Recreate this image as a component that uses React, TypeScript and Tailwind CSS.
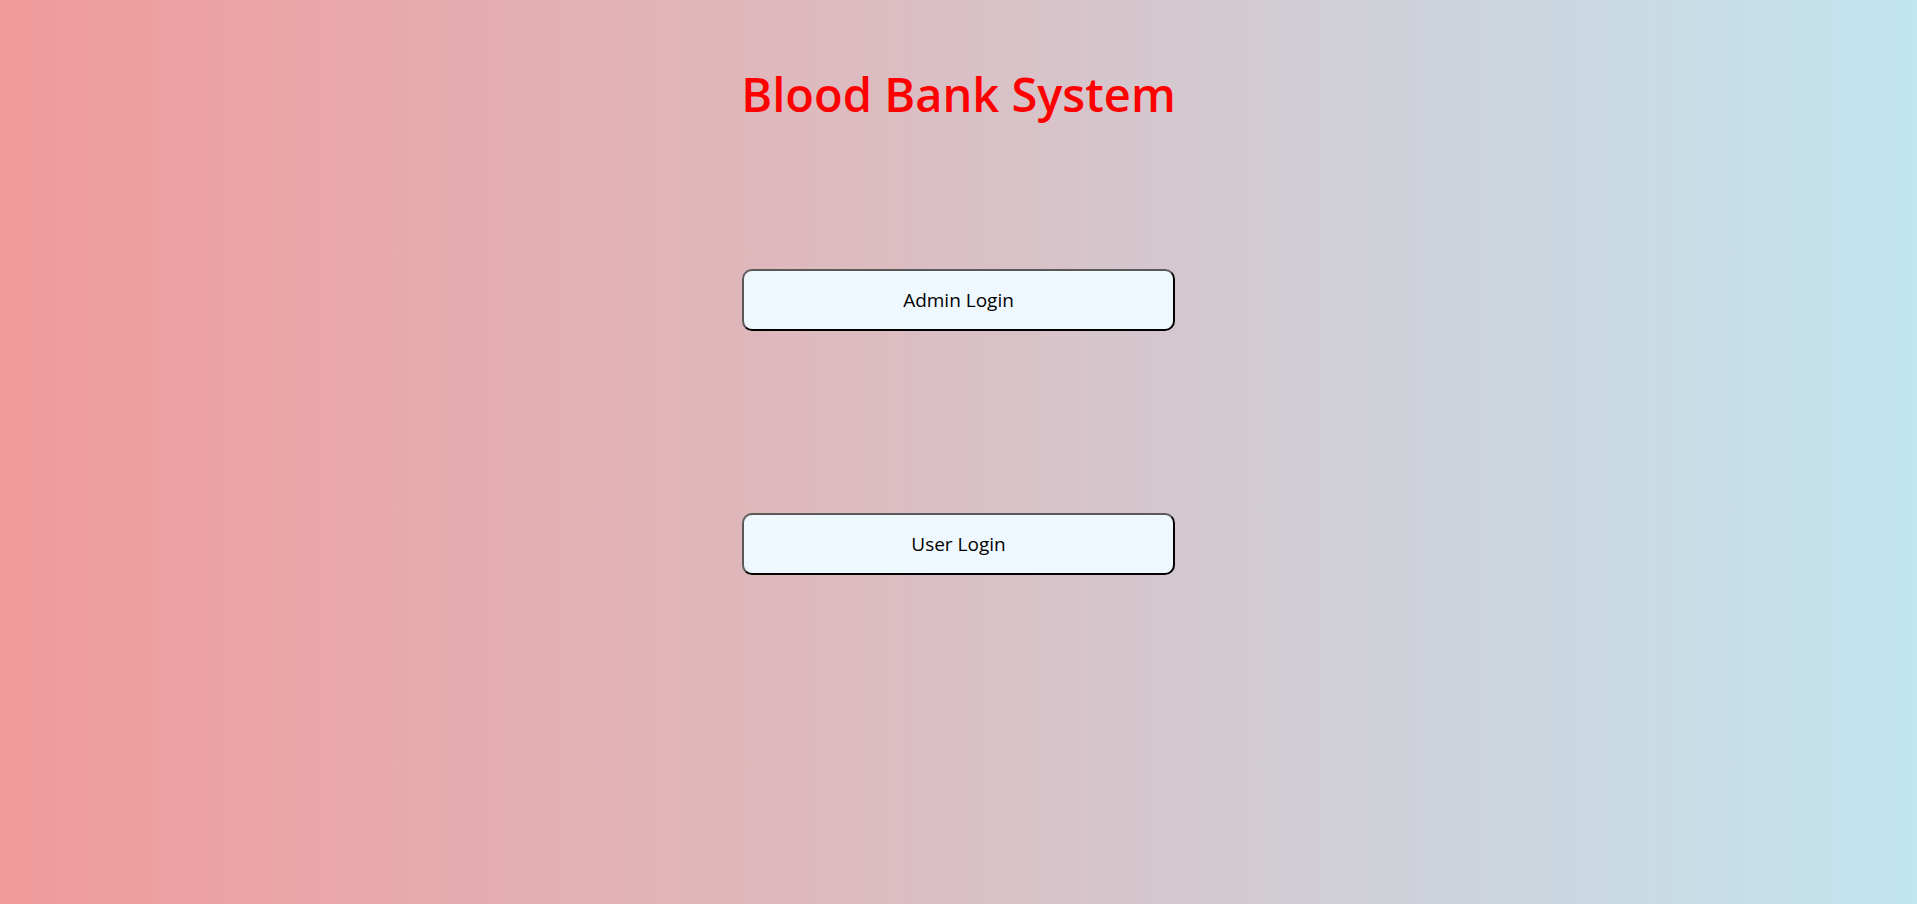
export default function App() {
  return (
    <div
      className="flex min-h-screen w-full flex-col items-center bg-[linear-gradient(to_right,#f19a9a,#c2e5f0)]"
      style={{ fontFamily: '"Open Sans", "Noto Sans", sans-serif' }}
    >
      <h1 className="mt-[62px] text-[47px] font-semibold leading-[64px] text-[#ff0000]">
        Blood Bank System
      </h1>

      <div className="mt-[143px] flex flex-col gap-[182px]">
        <button className="h-[62px] w-[433px] rounded-[10px] border-2 border-t-[#5a5a5a] border-l-[#5a5a5a] border-r-black border-b-black bg-[#f0f8ff] text-[19px] text-black">
          Admin Login
        </button>
        <button className="h-[62px] w-[433px] rounded-[10px] border-2 border-t-[#5a5a5a] border-l-[#5a5a5a] border-r-black border-b-black bg-[#f0f8ff] text-[19px] text-black">
          User Login
        </button>
      </div>
    </div>
  );
}
